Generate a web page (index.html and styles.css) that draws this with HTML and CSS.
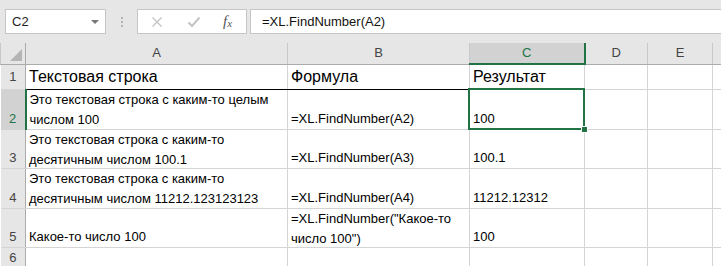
FILE: index.html
```html
<!DOCTYPE html>
<html lang="ru">
<head>
<meta charset="UTF-8">
<title>XL.FindNumber</title>
<link rel="stylesheet" href="styles.css">
</head>
<body>
<div class="fbar">
	<div class="namebox"><span>C2</span><i class="caret"></i></div>
	<div class="grip"><b></b><b></b><b></b></div>
	<div class="fxbox">
		<svg class="ico" width="12" height="12" viewBox="0 0 12 12"><path d="M1.5 1.5 L10.5 10.5 M10.5 1.5 L1.5 10.5" stroke="#c4c4c4" stroke-width="1.4" fill="none"/></svg>
		<svg class="ico" width="14" height="12" viewBox="0 0 14 12"><path d="M1.5 6.5 L5 10 L12.5 1.5" stroke="#c4c4c4" stroke-width="2" fill="none"/></svg>
		<span class="fx">f<sub>x</sub></span>
	</div>
	<div class="finput">=XL.FindNumber(A2)</div>
</div>
<table class="sheet">
	<colgroup>
		<col class="c-rh"><col class="c-a"><col class="c-b"><col class="c-c"><col class="c-d"><col class="c-e"><col class="c-f">
	</colgroup>
	<tr class="colhead">
		<th class="corner"><i></i></th><th>A</th><th>B</th><th class="on">C</th><th>D</th><th>E</th><th></th>
	</tr>
	<tr class="r1">
		<th>1</th><td class="ul">Текстовая строка</td><td class="ul">Формула</td><td class="ul">Результат</td><td></td><td></td><td></td>
	</tr>
	<tr>
		<th class="on">2</th><td><div class="wrap">Это текстовая строка с каким-то целым<br>числом 100</div></td><td>=XL.FindNumber(A2)</td><td class="sel">100</td><td></td><td></td><td></td>
	</tr>
	<tr>
		<th>3</th><td><div class="wrap">Это текстовая строка с каким-то<br>десятичным числом 100.1</div></td><td>=XL.FindNumber(A3)</td><td>100.1</td><td></td><td></td><td></td>
	</tr>
	<tr>
		<th>4</th><td><div class="wrap">Это текстовая строка с каким-то<br>десятичным числом 11212.123123123</div></td><td>=XL.FindNumber(A4)</td><td>11212.12312</td><td></td><td></td><td></td>
	</tr>
	<tr>
		<th>5</th><td>Какое-то число 100</td><td><div class="wrap">=XL.FindNumber("Какое-то<br>число 100")</div></td><td>100</td><td></td><td></td><td></td>
	</tr>
	<tr class="r6">
		<th>6</th><td></td><td></td><td></td><td></td><td></td><td></td>
	</tr>
</table>
</body>
</html>
```
FILE: styles.css
```css
html, body {margin:0; padding:0; background:#fff; overflow:hidden; font-family:"Liberation Sans", Arial, sans-serif;}

/* formula bar */
.fbar {display:flex; align-items:center; height:43px; background:#e6e6e6; padding:0 0 0 5px; box-sizing:border-box;}
.namebox {display:flex; align-items:center; justify-content:space-between; width:101px; height:25px; box-sizing:border-box; background:#fff; border:1px solid #c6c6c6; padding:0 6px 0 6px; font-size:13px; color:#222;}
.caret {width:0; height:0; border-left:4px solid transparent; border-right:4px solid transparent; border-top:4px solid #777;}
.grip {display:flex; flex-direction:column; gap:2px; width:31px; align-items:center;}
.grip b {width:2px; height:2px; background:#b4b4b4;}
.fxbox {display:flex; align-items:center; width:110px; height:25px; box-sizing:border-box; background:#fff; border:1px solid #c6c6c6; padding:0 0 0 13px; gap:0;}
.fxbox .ico {margin-right:24px;}
.fx {font-family:"Liberation Serif", serif; font-style:italic; font-size:15px; color:#555; margin-left:-2px;}
.fx sub {font-size:11px; vertical-align:-1px;}
.finput {flex:1; height:25px; box-sizing:border-box; background:#fff; border:1px solid #c6c6c6; border-right:0; margin-left:3px; padding:0 0 0 11px; font-size:13px; line-height:24px; color:#111;}

/* grid */
.sheet {border-collapse:collapse; table-layout:fixed; width:780px; font-size:13px;}
.c-rh {width:25px;}
.c-a {width:262px;}
.c-b {width:182px;}
.c-c {width:115px;}
.c-d {width:63px;}
.c-e {width:65px;}
.c-f {width:68px;}
.sheet td, .sheet th {padding:0; overflow:hidden; white-space:nowrap;}
.sheet td {border:1px solid #d4d4d4; vertical-align:bottom; padding:0 3px; line-height:20px; height:38.5px; color:#000;}
.sheet td .wrap {height:38.5px; line-height:20px;}

.sheet tr.colhead th {height:20px;}
.colhead th {background:#e6e6e6; font-weight:normal; color:#444; font-size:13px; border-left:1px solid #c8c8c8; border-right:1px solid #c8c8c8; border-bottom:1px solid #ababab; vertical-align:middle; line-height:18px;}
.colhead th.on {background:#d2d2d2; color:#217346; border-bottom:2px solid #217346;}
.corner {position:relative;}
.corner i {position:absolute; right:3px; bottom:3px; width:0; height:0; border-left:12px solid transparent; border-bottom:12px solid #b4b4b4;}

.sheet tr > th:first-child {background:#e6e6e6; color:#444; font-weight:normal; font-size:13px; border-right:1px solid #ababab; border-bottom:1px solid #d4d4d4; vertical-align:bottom; line-height:20px; height:38.5px;}
.sheet tr > th.on {background:#d2d2d2; color:#217346; border-right:2px solid #217346;}
.sheet tr.colhead > th:first-child {border-bottom:1px solid #ababab; vertical-align:middle; height:20px;}

.sheet tr.r1 td {font-size:16px; line-height:22px; padding-bottom:1px; height:23px;}
.sheet tr.r1 > th:first-child {line-height:22px; padding-bottom:1px; height:23px;}
.r1 td.ul {border-bottom:1px solid #000;}
.sheet tr.r6 td, .sheet tr.r6 > th:first-child {height:19px; vertical-align:top;}

/* active cell */
.sheet td.sel {position:relative; overflow:visible;}
td.sel::after {content:""; position:absolute; left:-2px; top:-2px; right:-1px; bottom:-1px; border:2px solid #217346; pointer-events:none;}
td.sel::before {content:""; position:absolute; right:-4px; bottom:-4px; width:5px; height:5px; background:#217346; border:1px solid #fff; z-index:1;}
```
